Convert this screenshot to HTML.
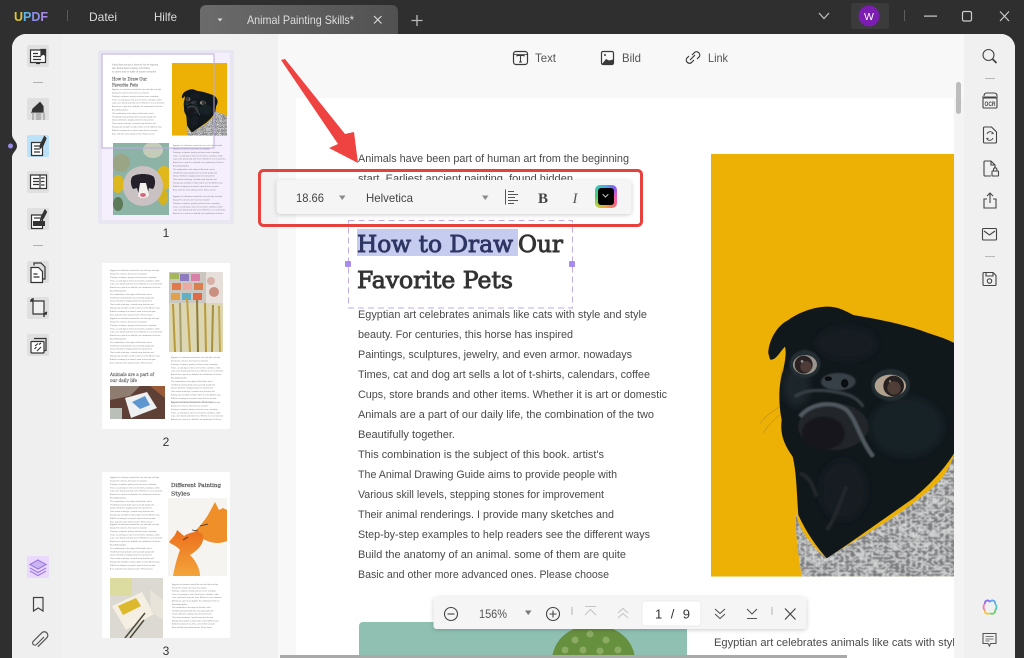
<!DOCTYPE html>
<html><head><meta charset="utf-8"><title>UPDF</title>
<style>
html,body{margin:0;padding:0;background:#2f2f2f;overflow:hidden}
body{width:1024px;height:658px;position:relative;font-family:"Liberation Sans",sans-serif}
svg{position:absolute;left:0;top:0;display:block;overflow:hidden}
text{font-family:"Liberation Sans",sans-serif}
.sw{position:absolute;left:595px;top:185px;width:22px;height:23px;border-radius:5px;background:conic-gradient(from 0deg,#4aa8f0,#8a5cf0,#ee5fb0,#f06a7a,#f5a030,#b5d040,#3fd070,#3fc8b0,#4aa8f0)}
.sw i{position:absolute;left:3px;top:3px;width:16px;height:17px;border-radius:3px;background:#000}
.sw b{position:absolute;left:7.5px;top:7px;width:4px;height:4px;border-right:1.2px solid #ddd;border-bottom:1.2px solid #ddd;transform:rotate(45deg) scale(.9)}
</style></head><body>
<svg width="1024" height="658" viewBox="0 0 1024 658" xmlns="http://www.w3.org/2000/svg">
<defs>
<linearGradient id="tab" x1="0" x2="1" y1="0" y2="0"><stop offset="0" stop-color="#6b6b6b"/><stop offset="1" stop-color="#515151"/></linearGradient>
<linearGradient id="fox" x1="0" x2="0" y1="0" y2="1"><stop offset="0" stop-color="#ec6f1c"/><stop offset="1" stop-color="#f3a43a"/></linearGradient>
<filter id="knit2" x="0" y="0" width="100%" height="100%"><feTurbulence type="turbulence" baseFrequency=".06 .1" numOctaves="2" seed="9" result="n"/><feColorMatrix in="n" values="0 0 0 0 .2 0 0 0 0 .2 0 0 0 0 .21 2.800 2.800 0 0 -.8" result="d"/><feGaussianBlur in="d" stdDeviation="1.500" result="db"/><feComposite in="db" in2="SourceGraphic" operator="in" result="c"/><feMerge><feMergeNode in="SourceGraphic"/><feMergeNode in="c"/></feMerge></filter>
<filter id="b3"><feGaussianBlur stdDeviation="12"/></filter>
<filter id="b1"><feGaussianBlur stdDeviation="2.500"/></filter>
<filter id="th"><feGaussianBlur stdDeviation=".3"/></filter>
<filter id="sh" x="-5%" y="-20%" width="110%" height="150%"><feDropShadow dx="0" dy="1" stdDeviation="2" flood-color="#000" flood-opacity=".2"/></filter>
<clipPath id="mainclip"><rect x="296" y="98" width="658" height="560"/></clipPath>
<clipPath id="pugclip"><rect x="33" y="42" width="960" height="1268"/></clipPath>
<clipPath id="pugmain"><rect x="711" y="153" width="243" height="424"/></clipPath>
<clipPath id="thumbpug"><rect x="172" y="63" width="55" height="73"/></clipPath>
<clipPath id="c1"><rect x="113" y="143" width="56" height="72"/></clipPath>
<clipPath id="c2"><rect x="169" y="272" width="54" height="80"/></clipPath>
<clipPath id="c3"><rect x="110" y="386" width="55" height="33"/></clipPath>
<clipPath id="c4"><rect x="168" y="498" width="59" height="78"/></clipPath>
<clipPath id="c5"><rect x="110" y="578" width="53" height="60"/></clipPath>
<clipPath id="t1b"><rect x="170" y="194" width="60" height="20"/></clipPath>
<clipPath id="t2b"><rect x="170" y="400" width="60" height="20"/></clipPath>

<g id="pug" clip-path="url(#pugclip)">
<rect x="33" y="42" width="960" height="1268" fill="#edb005"/>
<path d="M288,1120C300,1180 340,1220 380,1255C480,1190 600,1130 700,1040C745,1000 762,960 775,880L993,960L993,1310L305,1310C295,1240 285,1180 288,1120Z" fill="#d4d6d6" filter="url(#knit2)"/>
<path d="M205,640C205,610 225,560 265,540C300,515 345,500 385,500C415,500 440,515 460,525C520,535 600,550 665,572C710,590 770,600 800,640C840,690 835,745 805,790L790,880C775,930 730,1000 640,1075C560,1130 450,1210 380,1255C350,1220 320,1180 295,1125C290,1060 290,1000 278,950C250,910 240,880 245,840C235,790 235,730 250,690C255,660 260,640 255,620C240,635 225,665 210,658Z" fill="#11181c"/>
<g fill="none">
<ellipse cx="620" cy="860" rx="110" ry="90" fill="#172127" filter="url(#b3)"/>
<ellipse cx="440" cy="610" rx="90" ry="50" fill="#151d22" filter="url(#b3)"/>
<ellipse cx="290" cy="740" rx="40" ry="60" fill="#1c262b" filter="url(#b3)"/>
<ellipse cx="430" cy="1050" rx="70" ry="90" fill="#161c20" filter="url(#b3)"/>
<ellipse cx="400" cy="860" rx="105" ry="70" fill="#22282b" filter="url(#b1)"/>
<path d="M300,830C330,790 400,780 440,810C470,840 480,900 520,950" stroke="#4f595e" stroke-width="13" filter="url(#b1)"/>
<path d="M285,770C320,745 370,750 400,755C440,760 470,770 490,800" stroke="#343e43" stroke-width="10" filter="url(#b1)"/>
<ellipse cx="415" cy="725" rx="52" ry="26" fill="#384146" filter="url(#b1)"/>
<ellipse cx="385" cy="716" rx="11" ry="7" fill="#0a0e11"/><ellipse cx="434" cy="730" rx="11" ry="13" fill="#0a0e11"/>
<ellipse cx="370" cy="880" rx="65" ry="50" fill="#15191c" filter="url(#b1)"/>
<path d="M300,1000C330,1010 340,1040 350,1070M440,1040C420,1080 410,1130 380,1170" stroke="#20272b" stroke-width="12" filter="url(#b1)"/>
<path d="M180,850C195,830 215,815 240,800M190,880C200,860 220,840 240,825" stroke="#a57f1c" stroke-width="1.500"/>
</g>
<ellipse cx="315" cy="672" rx="46" ry="42" fill="#242d32" filter="url(#b1)"/>
<ellipse cx="315" cy="674" rx="36" ry="29" fill="#9a948d"/>
<circle cx="311" cy="674" r="27" fill="#2a2123"/><circle cx="318" cy="680" r="17" fill="#4d3b38"/><circle cx="306" cy="664" r="4" fill="#8e8e8e"/>
<ellipse cx="572" cy="735" rx="58" ry="48" fill="#242d32" filter="url(#b1)"/>
<ellipse cx="571" cy="737" rx="47" ry="33" fill="#b2a290"/>
<circle cx="581" cy="738" r="31" fill="#272021"/><circle cx="582" cy="744" r="20" fill="#4f3d37"/><circle cx="570" cy="724" r="3.500" fill="#887f78"/>
</g>

<g id="body" fill="#4a4a4a" font-size="11.200">
<text x="0" y="18" textLength="289" lengthAdjust="spacingAndGlyphs">Egyptian art celebrates animals like cats with style and style</text>
<text x="0" y="38" textLength="215" lengthAdjust="spacingAndGlyphs">beauty. For centuries, this horse has inspired</text>
<text x="0" y="58" textLength="274" lengthAdjust="spacingAndGlyphs">Paintings, sculptures, jewelry, and even armor. nowadays</text>
<text x="0" y="78" textLength="292" lengthAdjust="spacingAndGlyphs">Times, cat and dog art sells a lot of t-shirts, calendars, coffee</text>
<text x="0" y="98" textLength="309" lengthAdjust="spacingAndGlyphs">Cups, store brands and other items. Whether it is art or domestic</text>
<text x="0" y="118" textLength="296" lengthAdjust="spacingAndGlyphs">Animals are a part of our daily life, the combination of the two</text>
<text x="0" y="138" textLength="97" lengthAdjust="spacingAndGlyphs">Beautifully together.</text>
<text x="0" y="158" textLength="246" lengthAdjust="spacingAndGlyphs">This combination is the subject of this book. artist's</text>
<text x="0" y="178" textLength="259" lengthAdjust="spacingAndGlyphs">The Animal Drawing Guide aims to provide people with</text>
<text x="0" y="198" textLength="246" lengthAdjust="spacingAndGlyphs">Various skill levels, stepping stones for improvement</text>
<text x="0" y="218" textLength="256" lengthAdjust="spacingAndGlyphs">Their animal renderings. I provide many sketches and</text>
<text x="0" y="238" textLength="292" lengthAdjust="spacingAndGlyphs">Step-by-step examples to help readers see the different ways</text>
<text x="0" y="258" textLength="268" lengthAdjust="spacingAndGlyphs">Build the anatomy of an animal. some of them are quite</text>
<text x="0" y="278" textLength="251" lengthAdjust="spacingAndGlyphs">Basic and other more advanced ones. Please choose</text>
</g>
</defs>

<!-- frame -->
<rect width="1024" height="658" fill="#2f2f2f"/>
<path d="M200,34V11a6,6 0 0 1 6-6H392a6,6 0 0 1 6,6V34Z" fill="url(#tab)"/>
<text x="14" y="21" font-size="12.500" font-weight="700" textLength="34" lengthAdjust="spacing"><tspan fill="#dcc63c">U</tspan><tspan fill="#5fb4e8">P</tspan><tspan fill="#8c8cec">D</tspan><tspan fill="#a98be6">F</tspan></text>
<rect x="67" y="10" width="1" height="11" fill="#5a5a5a"/>
<text x="89" y="21" font-size="12" fill="#dcdcdc" textLength="28" lengthAdjust="spacingAndGlyphs">Datei</text>
<text x="154" y="21" font-size="12" fill="#dcdcdc" textLength="23" lengthAdjust="spacingAndGlyphs">Hilfe</text>
<path d="M217.500,18.500h5l-2.500,3z" fill="#ddd"/>
<text x="247" y="24" font-size="12" fill="#dedede" textLength="107" lengthAdjust="spacingAndGlyphs">Animal Painting Skills*</text>
<path d="M374,16l7.500,7.500M381.500,16l-7.500,7.500" stroke="#ddd" stroke-width="1.100" fill="none"/>
<path d="M417,15v11M411.500,20.500h11" stroke="#bbb" stroke-width="1.300" fill="none"/>
<path d="M819,13l5,5.500l5-5.500" stroke="#bbb" stroke-width="1.300" fill="none"/>
<rect x="851" y="3" width="38" height="26" rx="3" fill="#3b3b3b"/>
<circle cx="869" cy="16" r="10.500" fill="#7a1db0"/>
<text x="869" y="20" font-size="10.500" fill="#fff" text-anchor="middle">W</text>
<rect x="904" y="10" width="1" height="11" fill="#5e5e5e"/>
<rect x="924" y="15.500" width="13" height="1.200" fill="#ccc"/>
<rect x="962.500" y="11.500" width="9" height="9.500" rx="1.500" fill="none" stroke="#ccc" stroke-width="1.200"/>
<path d="M1000,11.500l9,9.500M1009,11.500l-9,9.500" stroke="#ccc" stroke-width="1.200" fill="none"/>

<!-- panel -->
<path d="M12,658V48a14,14 0 0 1 14-14H1001a14,14 0 0 1 14,14V658Z" fill="#f8f8f8"/>
<path d="M12,658V48a14,14 0 0 1 14-14H62V658Z" fill="#efefef"/>
<rect x="62" y="34" width="216" height="624" fill="#f1f1f1"/>
<path d="M964,34H1001a14,14 0 0 1 14,14V658H964Z" fill="#f0f0f0"/>
<path d="M954,98h10v560h-10z" fill="#f4f4f4"/>
<rect x="296" y="98" width="658" height="560" fill="#fff"/>

<!-- notch -->
<path d="M12,134C12,140 17,141 17,146C17,151 12,152 12,158Z" fill="#2f2f2f"/>
<circle cx="10.500" cy="146" r="2.500" fill="#9a8ae8"/>

<!-- left icons -->
<g fill="#e0e0e0">
<rect x="27" y="45" width="22" height="22" rx="2"/>
<rect x="27" y="98" width="22" height="22" rx="2"/>
<rect x="27" y="135" width="22" height="22" rx="2" fill="#bce2fa"/>
<rect x="27" y="171" width="22" height="22" rx="2"/>
<rect x="27" y="208" width="22" height="22" rx="2"/>
<rect x="27" y="261" width="22" height="22" rx="2"/>
<rect x="27" y="297" width="22" height="22" rx="2"/>
<rect x="27" y="334" width="22" height="22" rx="2"/>
<rect x="27" y="556" width="22" height="22" rx="2" fill="#ead9fb"/>
</g>
<rect x="33" y="82" width="10" height="1" fill="#b0b0b0"/>
<rect x="33" y="245" width="10" height="1" fill="#b0b0b0"/>
<g fill="none" stroke="#333" stroke-width="1.200">
<path d="M30.500,50h15v12.500h-15z" fill="#fff"/><path d="M41,49.500h4.500v6l-2.200-1.500l-2.300,1.500z" fill="#333"/><path d="M33,53.500h5M33,56.500h8M33,59.500h8"/><path d="M36,63.500h4"/>
<path d="M40,102.500l3,4v6h-11l1-3.500z" fill="#333"/><rect x="32" y="112.500" width="13" height="7.500" fill="#b5b5b5" stroke="none"/><path d="M35,113v7M42,113v7" stroke="#fff" stroke-width="1"/>
<path d="M31.500,142.500h11v13h-11z" fill="#fff"/><path d="M34,146h6M34,149h5M34,152h6"/><path d="M44.500,136.500l-4,8l-.5,4l3-3l3-7z" fill="#333"/>
<path d="M30.500,175h16v13.500h-16z" fill="#fff"/><path d="M33,178.500h6M33,181.500h6M33,184.500h6M41,178h3.500M41,181.500h3.500M41,185h3.500M40,175v13.500"/>
<path d="M31.500,215h11v13.500h-11z" fill="#fff"/><rect x="33" y="221" width="12" height="5" fill="#333" stroke="none"/><path d="M34,218h6"/><path d="M45,210l-4,7.500l-.5,3l3-2.500l3-6z" fill="#333"/>
<path d="M34,265.500v-2.500h7l4,4v12h-2"/><path d="M31,267.500h7.500l4,4v11h-11.500z" fill="#fff"/><path d="M33.500,274h4M33.500,277h6"/>
<path d="M33,301h11v13h-11z" fill="#f1f1f1"/><path d="M30,301h3M33,298v3M44,314v3M44,314h3M47,312l-3,2M31,299l2,2" stroke-width="1.400"/>
<path d="M34,338.500h12v12h-2"/><rect x="31" y="341.500" width="13" height="11.500" rx="1" fill="#fff"/><path d="M34.500,349l2-2M37,351l4-4M35,346l3-2.500M39,344.500l2-1.500" stroke-width="1.100"/>
<g stroke="#9f7ae6" stroke-width="1.200"><path d="M38,560l8,4.500l-8,4.500l-8-4.500z" fill="#c9b5f0"/><path d="M30,568l8,4.500l8-4.500"/><path d="M30,571l8,4.500l8-4.500"/></g>
<path d="M33.500,597.500h9.500v13.500l-4.750-3l-4.750,3z" stroke="#444"/>
<path d="M44.500,637.500l-7.500,7.500a2.200,2.200 0 0 1-3.200-3.200l8.500-8.500a3.500,3.500 0 0 1 5,5l-9,9" stroke="#555" transform="translate(-.5,-.5)"/>
</g>

<!-- thumbnails -->
<rect x="98" y="50" width="136" height="174" rx="2" fill="#e8e6f0"/>
<rect x="102" y="53" width="128" height="167" fill="#f5effd"/>
<rect x="102" y="54" width="112" height="94" fill="#fff"/>
<g filter="url(#th)" opacity=".72">
<g font-size="2.300" fill="#666">
<text x="112" y="65.500" textLength="46" lengthAdjust="spacingAndGlyphs">Animals have been part of human art from the beginning</text>
<text x="112" y="69" textLength="38" lengthAdjust="spacingAndGlyphs">start. Earliest ancient painting, found hidden</text>
<text x="112" y="72.500" textLength="44" lengthAdjust="spacingAndGlyphs">in caves and on walls of ancient temples</text>
</g>
<text x="112" y="80.500" font-size="4.600" fill="#333" stroke="#333" stroke-width=".2" textLength="35" lengthAdjust="spacingAndGlyphs" style="font-family:'DejaVu Serif',serif">How to Draw Our</text>
<text x="112" y="86.500" font-size="4.600" fill="#333" stroke="#333" stroke-width=".2" textLength="26" lengthAdjust="spacingAndGlyphs" style="font-family:'DejaVu Serif',serif">Favorite Pets</text>
<use href="#body" transform="translate(112,87) scale(.17)"/>
<use href="#body" transform="translate(173,143) scale(.17)"/>
<g clip-path="url(#t1b)"><use href="#body" transform="translate(173,194) scale(.17)"/></g>
</g>
<g clip-path="url(#thumbpug)"><use href="#pug" transform="translate(170.100,60.600) scale(.0573)"/></g>
<g clip-path="url(#c1)">
<rect x="113" y="143" width="56" height="72" fill="#8db3a7"/>
<ellipse cx="121" cy="163" rx="9" ry="9" fill="#9aa585"/>
<ellipse cx="153" cy="150" rx="10" ry="8" fill="#c5cdb9"/>
<ellipse cx="164" cy="178" rx="8" ry="12" fill="#e0b81c"/>
<ellipse cx="163" cy="197" rx="5" ry="8" fill="#d5b220"/>
<ellipse cx="118" cy="184" rx="6" ry="9" fill="#dcb81e"/>
<ellipse cx="118" cy="204" rx="5" ry="7" fill="#5c7a58"/>
<circle cx="143" cy="186" r="20" fill="#c9c1c2"/>
<path d="M132,177c4-4 18-4 22,0c2,5 1,9-1,12l-4-1l-2,8c-3,3-7,2-8,-1l-2-7l-4,1c-2-3-3-8-1-12z" fill="#25202a"/>
<path d="M140,183h6l3,12c-2,4-9,4-11,1z" fill="#f4f0ee"/><ellipse cx="143" cy="195" rx="3" ry="2" fill="#d66a80"/>
</g>
<rect x="102" y="54" width="112" height="94" fill="none" stroke="#bba8e2" stroke-width="1"/>
<text x="166" y="237" font-size="12" fill="#333" text-anchor="middle">1</text>

<rect x="102" y="263" width="128" height="166" rx="1" fill="#fff"/>
<g filter="url(#th)" opacity=".72">
<use href="#body" transform="translate(110,268) scale(.17)"/>
<use href="#body" transform="translate(110,316) scale(.17)"/>
<use href="#body" transform="translate(171,355) scale(.17)"/>
<g clip-path="url(#t2b)"><use href="#body" transform="translate(171,400) scale(.17)"/></g>
<text x="110" y="376" font-size="4.600" fill="#333" stroke="#333" stroke-width=".2" textLength="44" lengthAdjust="spacingAndGlyphs" style="font-family:'DejaVu Serif',serif">Animals are a part of</text>
<text x="110" y="382" font-size="4.600" fill="#333" stroke="#333" stroke-width=".2" textLength="27" lengthAdjust="spacingAndGlyphs" style="font-family:'DejaVu Serif',serif">our daily life</text>
</g>
<g clip-path="url(#c2)">
<rect x="169" y="272" width="54" height="80" fill="#dcd7b2"/>
<rect x="169" y="272" width="54" height="31" fill="#c9c7c0"/>
<rect x="206" y="272" width="17" height="31" fill="#e6dfda"/>
<rect x="170" y="273" width="9" height="6" fill="#a4b85a"/><rect x="180" y="274" width="9" height="7" fill="#8e7cc0"/><rect x="191" y="274" width="9" height="7" fill="#d97fa8"/>
<rect x="172" y="283" width="9" height="7" fill="#e07a4c"/><rect x="183" y="283" width="9" height="7" fill="#eea9a5"/><rect x="194" y="283" width="9" height="7" fill="#d97f50"/>
<rect x="171" y="293" width="9" height="7" fill="#e3a04c"/><rect x="182" y="293" width="9" height="7" fill="#5db0c8"/><rect x="193" y="293" width="9" height="7" fill="#e06a48"/>
<circle cx="214" cy="292" r="5" fill="#c98f80"/><circle cx="211" cy="281" r="4" fill="#d9b0a8"/>
<g stroke-width="2" fill="none">
<path d="M173,304l2,48" stroke="#b89a3a"/><path d="M180,303l1,49" stroke="#a6a070"/><path d="M187,298l3,54" stroke="#c0a040"/><path d="M197,300l1,52" stroke="#8f7c3a"/><path d="M205,303l1,49" stroke="#b89a3a"/><path d="M213,305l-1,47" stroke="#a69040"/><path d="M219,306l1,46" stroke="#c0a850"/>
</g>
</g>
<g clip-path="url(#c3)">
<rect x="110" y="386" width="55" height="33" fill="#5e4036"/>
<path d="M110,386h30l-10,10l-20,4z" fill="#8e7d70"/>
<path d="M125,398l22-6l10,16l-26,10z" fill="#eef0f2"/>
<path d="M132,402l13-6l5,9l-10,4z" fill="#5e97cf"/>
<rect x="110" y="408" width="12" height="11" fill="#b9c0b8"/>
<path d="M150,386h15v12z" fill="#9a5a38"/>
</g>
<text x="166" y="446" font-size="12" fill="#333" text-anchor="middle">2</text>

<rect x="102" y="472" width="128" height="166" rx="1" fill="#fff"/>
<g filter="url(#th)" opacity=".72">
<use href="#body" transform="translate(110,475) scale(.17)"/>
<use href="#body" transform="translate(110,522) scale(.17)"/>
<use href="#body" transform="translate(172,582) scale(.16,.165)"/>
</g>
<text x="171" y="487" font-size="5.800" fill="#4a4a4a" stroke="#4a4a4a" stroke-width=".2" textLength="50" lengthAdjust="spacingAndGlyphs" style="font-family:'DejaVu Serif',serif">Different Painting</text>
<text x="171" y="495.500" font-size="5.800" fill="#4a4a4a" stroke="#4a4a4a" stroke-width=".2" textLength="19" lengthAdjust="spacingAndGlyphs" style="font-family:'DejaVu Serif',serif">Styles</text>
<g clip-path="url(#c4)">
<rect x="168" y="498" width="59" height="78" fill="#f6f4f0"/>
<path d="M215,502l4,8l4-2l4,2V541C215,546 205,541 193,533C200,526 205,520 208,515Z" fill="#ef8f2a"/>
<path d="M177,530l7,6C190,532 200,530 203,535C205,545 195,552 190,555C197,562 200,570 200,576H173C175,565 178,555 180,550C176,545 172,545 169,542C172,538 176,535 177,530Z" fill="url(#fox)"/>
<path d="M200,526l8,-2M192,530l6,1M183,540l5-3" stroke="#333" stroke-width=".8" fill="none"/>
</g>
<g clip-path="url(#c5)">
<rect x="110" y="578" width="53" height="60" fill="#dcd8d2"/>
<rect x="110" y="578" width="22" height="18" fill="#dcdca0"/>
<path d="M112,606l30-14l12,22l-28,16z" fill="#f4efe2"/>
<path d="M118,606l18-8l5,8l-18,9z" fill="#dcb92c"/>
<path d="M125,638l20-25M130,638l14-18" stroke="#4a4a38" stroke-width="1.500"/>
<path d="M150,590l13,10v20l-12-8z" fill="#e8e4da"/>
</g>
<text x="166" y="655" font-size="12" fill="#333" text-anchor="middle">3</text>

<!-- main page -->
<g clip-path="url(#mainclip)">
<g fill="#4a4a4a" font-size="11.200">
<text x="358" y="162" textLength="271" lengthAdjust="spacingAndGlyphs">Animals have been part of human art from the beginning</text>
<text x="358" y="182" textLength="215" lengthAdjust="spacingAndGlyphs">start. Earliest ancient painting, found hidden</text>
</g>
<use href="#body" transform="translate(358,300)"/>
<g clip-path="url(#pugmain)"><use href="#pug" transform="translate(700,140) scale(.33333)"/></g>
<path d="M359,658V626a4,4 0 0 1 4-4H687V658Z" fill="#8fc0b2"/>
<path d="M552,658C555,635 575,625 593,625C612,625 632,635 635,658Z" fill="#668f3e"/>
<g fill="#8aab62"><circle cx="575" cy="640" r="3.500"/><circle cx="590" cy="634" r="3.500"/><circle cx="606" cy="640" r="3.500"/><circle cx="565" cy="650" r="3.500"/><circle cx="583" cy="650" r="3.500"/><circle cx="600" cy="651" r="3.500"/><circle cx="618" cy="650" r="3.500"/></g>
<text x="714" y="646" font-size="11.200" fill="#4a4a4a" textLength="247" lengthAdjust="spacingAndGlyphs">Egyptian art celebrates animals like cats with style</text>
</g>
<rect x="956" y="82" width="5" height="32" rx="2.500" fill="#bdbdbd"/>
<rect x="280" y="655" width="567" height="3" fill="#a9a9a9"/>

<!-- heading selection -->
<rect x="357" y="229" width="161" height="27" fill="#c5ccef"/>
<g font-size="23.500">
<text x="357" y="252" fill="#2f3563" stroke="#2f3563" stroke-width=".9" textLength="156" lengthAdjust="spacingAndGlyphs" style="font-family:'DejaVu Serif',serif">How to Draw</text>
<text x="518" y="252" fill="#333" stroke="#333" stroke-width=".9" textLength="45" lengthAdjust="spacingAndGlyphs" style="font-family:'DejaVu Serif',serif">Our</text>
<text x="357" y="288" fill="#333" stroke="#333" stroke-width=".9" textLength="156" lengthAdjust="spacingAndGlyphs" style="font-family:'DejaVu Serif',serif">Favorite Pets</text>
</g>
<rect x="348.500" y="220.500" width="224" height="87.500" fill="none" stroke="#c0aee8" stroke-width="1" stroke-dasharray="6 4"/>
<rect x="345" y="261" width="6" height="6" rx="1" fill="#a98bf0"/>
<rect x="569" y="261" width="6" height="6" rx="1" fill="#a98bf0"/>

<!-- format bar -->
<rect x="276.500" y="180" width="355" height="34" rx="4" fill="#f5f5f5" filter="url(#sh)"/>
<rect x="259.500" y="170.500" width="382" height="55" rx="4" fill="none" stroke="#e5413d" stroke-width="3"/>
<text x="296" y="202" font-size="12" fill="#444" textLength="28" lengthAdjust="spacingAndGlyphs">18.66</text>
<path d="M339,195.500h6.500l-3.250,4.500z" fill="#8a8a8a"/>
<text x="366" y="202" font-size="12" fill="#444" textLength="47" lengthAdjust="spacingAndGlyphs">Helvetica</text>
<path d="M482,195.500h6.500l-3.250,4.500z" fill="#8a8a8a"/>
<path d="M505.500,189.500v15M508,191.500h6M508,194.500h10M508,197.500h7M508,200.500h10M508,203.500h6" stroke="#555" stroke-width="1" fill="none"/>
<text x="543" y="203" font-size="15" font-weight="700" fill="#444" text-anchor="middle" style="font-family:'Liberation Serif',serif">B</text>
<text x="575" y="203" font-size="15" font-style="italic" fill="#555" text-anchor="middle" style="font-family:'Liberation Serif',serif">I</text>

<!-- arrow -->
<path d="M281,60L285,59L345,134L354,132L358,163L329,148L338,144Z" fill="#ee4340"/>

<!-- top toolbar -->
<g fill="none" stroke="#3a3a3a" stroke-width="1.200">
<rect x="513.500" y="51.500" width="14" height="13" rx="2.500"/><path d="M513.500,54.500h14" stroke-width=".8"/>
<path d="M517,56.500v-1h7v1M520.500,55.500v6.500M519,62h3" stroke-width="1.100"/>
<rect x="601.500" y="51.500" width="12" height="13" rx="1.500"/>
<path d="M602,64l4-5l3,1.500l4,-1v5z" fill="#3a3a3a" stroke="none"/><circle cx="605" cy="55" r="1" fill="#3a3a3a" stroke="none"/>
<path d="M692,55l2.500-2.500a3,3 0 0 1 4,0l.5.500a3,3 0 0 1 0,4l-2,2M694,60l-2.500,2.500a3,3 0 0 1-4,0l-.5-.5a3,3 0 0 1 0-4l2-2M690,60l5-5"/>
</g>
<g font-size="12" fill="#555">
<text x="535" y="62" textLength="21" lengthAdjust="spacingAndGlyphs">Text</text>
<text x="622" y="62" textLength="19" lengthAdjust="spacingAndGlyphs">Bild</text>
<text x="708" y="62" textLength="20" lengthAdjust="spacingAndGlyphs">Link</text>
</g>

<!-- right icons -->
<rect x="985" y="78" width="10" height="1" fill="#b8b8b8"/>
<rect x="985" y="256" width="10" height="1" fill="#b8b8b8"/>
<g fill="none" stroke="#444" stroke-width="1.100">
<circle cx="988.500" cy="55" r="5.500"/><path d="M992.500,59l4,4" stroke-width="1.800"/>
<path d="M984,96c0-2 1-3 3-3h7c2,0 3,1 3,3M982,97h16"/>
<rect x="983" y="98" width="14" height="10" rx="1"/>
<text x="990" y="106" font-size="6" font-weight="700" fill="#444" stroke="none" text-anchor="middle" textLength="11" lengthAdjust="spacingAndGlyphs">OCR</text>
<path d="M983.500,128a1,1 0 0 1 1-1h7l5,5v10a1,1 0 0 1-1,1h-11a1,1 0 0 1-1-1z"/>
<path d="M987,134a3.500,3.500 0 0 1 6-1M993,138a3.500,3.500 0 0 1-6,1M992,132l1.200,1.500l-1.800.3M988,140l-1.200-1.500l1.800-.3" stroke-width=".9"/>
<path d="M991,176h-6a1,1 0 0 1-1-1v-13a1,1 0 0 1 1-1h6l4,4v3M991,161v4h4"/>
<rect x="992" y="171" width="6.500" height="5" rx=".8"/><path d="M993.500,171v-1.500a1.700,1.700 0 0 1 3.400,0V171"/>
<path d="M987,199h-3v9h12v-9h-3M990,203v-10M987,196l3-3l3,3"/>
<rect x="982.500" y="228.500" width="14" height="11.500" rx="1"/><path d="M984,231l5.500,4l5.500-4"/>
<path d="M984,272.500h9l3,3v9a1,1 0 0 1-1,1h-11a1,1 0 0 1-1-1v-11a1,1 0 0 1 1-1z"/><path d="M986,273v3h7v-3"/><circle cx="989.500" cy="281" r="2.200"/>
<path d="M983,633.500h13v10h-5.500l-1,2.500l-1.500-2.500h-5z" stroke="#555"/><path d="M985.500,636.500h8M985.500,639h8M985.500,641h4" stroke="#777" stroke-width="1"/>
</g>
<g fill="none" stroke-width="1.800">
<path d="M985,604c-1-3 3-5 5-2" stroke="#8a6cf0"/><path d="M990,602c2-3 6-1 5,2" stroke="#5fa8f0"/>
<path d="M995,604c2,1 2,5 0,6" stroke="#52c9c0"/><path d="M995,610c1,3-3,5-5,3" stroke="#6fd06a"/>
<path d="M990,613c-2,2-6,0-5-3" stroke="#f0c53c"/><path d="M985,610c-2-1-2-5,0-6" stroke="#ef7fb0"/>
</g>

<!-- page bar -->
<rect x="433.500" y="597" width="373" height="32" rx="3" fill="#f5f5f5" filter="url(#sh)"/>
<rect x="642" y="601" width="59" height="25" rx="3" fill="#fff" stroke="#ebebeb"/>
<g fill="none" stroke="#444" stroke-width="1.100">
<circle cx="451" cy="614" r="6.500"/><path d="M447.500,614h7"/>
<circle cx="553" cy="614" r="6.500"/><path d="M549.500,614h7M553,610.500v7"/>
<path d="M585,606.500h11M585,615l5.500-5.500l5.500,5.500" stroke="#c4c4c4"/>
<path d="M618,613l5-4.500l5,4.500M618,618l5-4.500l5,4.500" stroke="#c4c4c4"/>
<path d="M715,609l5,4.500l5-4.500M715,614l5,4.500l5-4.500" stroke="#555"/>
<path d="M747,609l5,5l5-5M747,618.500h10" stroke="#555"/>
<path d="M785,608.500l10.500,11M795.500,608.500l-10.500,11" stroke-width="1.200"/>
<path d="M572,607v8M772,607v8" stroke="#b5b5b5" stroke-width="1"/>
</g>
<text x="479" y="618" font-size="12" fill="#555" textLength="28" lengthAdjust="spacingAndGlyphs">156%</text>
<path d="M525,610.500h6.500l-3.250,4.500z" fill="#777"/>
<text x="655" y="618.500" font-size="13" fill="#333" textLength="35" lengthAdjust="spacing">1 / 9</text>
</svg>
<div class="sw"><i></i><b></b></div>
</body></html>
